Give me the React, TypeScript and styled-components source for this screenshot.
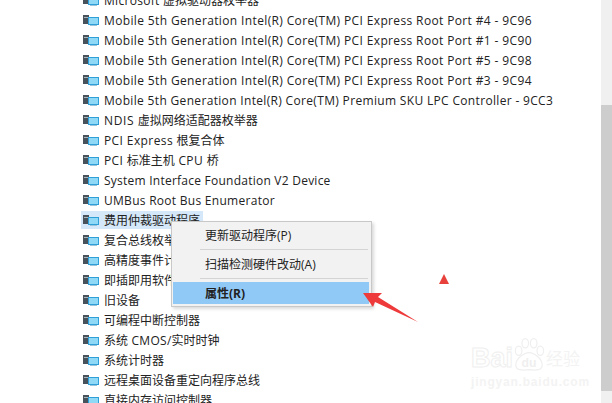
import React from "react";
import styled, { createGlobalStyle } from "styled-components";

const Global = createGlobalStyle`
  html, body { margin: 0; padding: 0; background: #fff; }
  #root { width: 612px; height: 403px; overflow: hidden; }
`;

const Window = styled.div`
  position: relative;
  width: 612px;
  height: 403px;
  overflow: hidden;
  display: flex;
  background: #fff;
  font-family: "Open Sans", "Noto Sans CJK SC", sans-serif;
  font-size: 12px;
  color: #222;
`;

const Tree = styled.ul`
  flex: 1;
  list-style: none;
  margin: -10px 0 0;
  padding: 0 0 0 83px;
`;

const Row = styled.li`
  height: 20px;
  display: flex;
  align-items: center;
  white-space: nowrap;
`;

const Label = styled.span<{ $selected?: boolean }>`
  display: flex;
  align-items: center;
  gap: 5px;
  height: 18px;
  padding: 0 3px 0 2px;
  margin-left: -2px;
  background: ${(p) => (p.$selected ? "#d5e8f9" : "transparent")};
`;

const LabelText = styled.span``;

const Latin = styled.span<{ $spacing: number }>`
  letter-spacing: ${(p) => p.$spacing}px;
`;

const Track = styled.div`
  width: 11px;
  flex: none;
  background: #f0f0f0;
  display: flex;
  flex-direction: column;
  padding-top: 105px;
  padding-bottom: 12px;
`;

const Thumb = styled.div`
  flex: 1;
  background: #cdcdcd;
`;

const Menu = styled.div`
  position: absolute;
  left: 171px;
  top: 221px;
  width: 196px;
  height: 80px;
  background: #f2f2f2;
  border: 1px solid #c8c8c8;
  box-shadow: 2px 2px 3px rgba(0, 0, 0, 0.15);
  padding: 2px 2px 2px 1px;
  display: flex;
  flex-direction: column;
  box-sizing: content-box;
`;

const MenuItem = styled.div<{ $active?: boolean }>`
  height: 22px;
  flex: none;
  display: flex;
  align-items: center;
  padding-left: 32px;
  font-weight: ${(p) => (p.$active ? 700 : 400)};
  background: ${(p) => (p.$active ? "#90c8f6" : "transparent")};
  color: #222;
`;

const Separator = styled.div`
  height: 1px;
  flex: none;
  margin: 3px 1px 3px 27px;
  background: #d4d4d4;
`;

const Overlay = styled.svg`
  position: absolute;
  left: 350px;
  top: 260px;
`;

const Watermark = styled.div`
  position: absolute;
  left: 471px;
  top: 336px;
  width: 125px;
  color: #f3f3f3;
  font-family: "Liberation Sans", "Noto Sans CJK SC", sans-serif;
  display: flex;
  flex-direction: column;
`;

const MarkTop = styled.div`
  display: flex;
  align-items: flex-end;
  height: 37px;
`;

const MarkLatin = styled.span`
  font-size: 27px;
  font-weight: 700;
  line-height: 30px;
  color: #fff;
  -webkit-text-stroke: 1px #efefef;
`;

const MarkCn = styled.span`
  font-size: 17px;
  margin-left: 1px;
  line-height: 26px;
`;

const MarkUrl = styled.span`
  font-size: 12px;
  letter-spacing: 0.8px;
  font-weight: 700;
  margin-top: 2px;
  white-space: nowrap;
`;

const DeviceIcon = () => (
  <svg width="16" height="11" viewBox="0 0 16 11">
    <rect x="0" y="0" width="6" height="9" fill="#47525b" />
    <rect x="1" y="2" width="4" height="1" fill="#aab4bb" />
    <rect x="5" y="2" width="11" height="8" fill="#2f9fd8" />
    <rect x="6" y="3" width="9" height="6" fill="#8fd8f6" />
    <rect x="7" y="10" width="7" height="1" fill="#9cc4da" />
  </svg>
);

const PORT = 0.365;
const rows: { text: string; spacing: number }[] = [
  { text: "Microsoft 虚拟驱动器枚举器", spacing: 0.3 },
  { text: "Mobile 5th Generation Intel(R) Core(TM) PCI Express Root Port #4 - 9C96", spacing: PORT },
  { text: "Mobile 5th Generation Intel(R) Core(TM) PCI Express Root Port #1 - 9C90", spacing: PORT },
  { text: "Mobile 5th Generation Intel(R) Core(TM) PCI Express Root Port #5 - 9C98", spacing: PORT },
  { text: "Mobile 5th Generation Intel(R) Core(TM) PCI Express Root Port #3 - 9C94", spacing: PORT },
  { text: "Mobile 5th Generation Intel(R) Core(TM) Premium SKU LPC Controller - 9CC3", spacing: 0.33 },
  { text: "NDIS 虚拟网络适配器枚举器", spacing: 0.6 },
  { text: "PCI Express 根复合体", spacing: 0.4 },
  { text: "PCI 标准主机 CPU 桥", spacing: 0.4 },
  { text: "System Interface Foundation V2 Device", spacing: 0.24 },
  { text: "UMBus Root Bus Enumerator", spacing: 0.28 },
  { text: "费用仲裁驱动程序", spacing: 0 },
  { text: "复合总线枚举器", spacing: 0 },
  { text: "高精度事件计时器", spacing: 0 },
  { text: "即插即用软件设备枚举器", spacing: 0 },
  { text: "旧设备", spacing: 0 },
  { text: "可编程中断控制器", spacing: 0 },
  { text: "系统 CMOS/实时时钟", spacing: 0.3 },
  { text: "系统计时器", spacing: 0 },
  { text: "远程桌面设备重定向程序总线", spacing: 0 },
  { text: "直接内存访问控制器", spacing: 0 },
];

const splitRuns = (text: string) => text.split(/([\u4e00-\u9fff]+)/).filter(Boolean);

export default function App() {
  return (
    <Window>
      <Global />
      <Tree>
        {rows.map((r) => (
          <Row key={r.text}>
            <Label $selected={r.text === "费用仲裁驱动程序"}>
              <DeviceIcon />
              <LabelText>
                {splitRuns(r.text).map((run, i) => (
                  <Latin key={i} $spacing={/[\u4e00-\u9fff]/.test(run) ? 0 : r.spacing}>
                    {run}
                  </Latin>
                ))}
              </LabelText>
            </Label>
          </Row>
        ))}
      </Tree>
      <Track>
        <Thumb />
      </Track>
      <Watermark>
        <MarkTop>
          <MarkLatin>Bai</MarkLatin>
          <svg width="32" height="36" viewBox="0 0 34 37">
            <g fill="none" stroke="#efefef" strokeWidth="1.3">
              <ellipse cx="6" cy="14" rx="3.5" ry="5" />
              <ellipse cx="13" cy="6" rx="3.5" ry="5" />
              <ellipse cx="22" cy="6" rx="3.5" ry="5" />
              <ellipse cx="29" cy="14" rx="3.5" ry="5" />
              <path d="M3 29c0-7 9-13 14-13s14 6 14 13c0 6-7 6-14 5-7 1-14 1-14-5z" />
            </g>
            <text x="17" y="31" textAnchor="middle" fontSize="13" fontWeight="700" fill="#efefef">
              du
            </text>
          </svg>
          <MarkCn>经验</MarkCn>
        </MarkTop>
        <MarkUrl>jingyan.baidu.com</MarkUrl>
      </Watermark>
      <Menu>
        <MenuItem>更新驱动程序(P)</MenuItem>
        <Separator />
        <MenuItem>扫描检测硬件改动(A)</MenuItem>
        <Separator />
        <MenuItem $active>属性(R)</MenuItem>
      </Menu>
      <Overlay width="110" height="70" viewBox="0 0 110 70">
        <polygon points="94,14 89,24 99,24" fill="#e8413c" />
        <polygon points="13,33 32,33 28,37 68,62 25,42 23,47" fill="#ee3a3a" />
      </Overlay>
    </Window>
  );
}
